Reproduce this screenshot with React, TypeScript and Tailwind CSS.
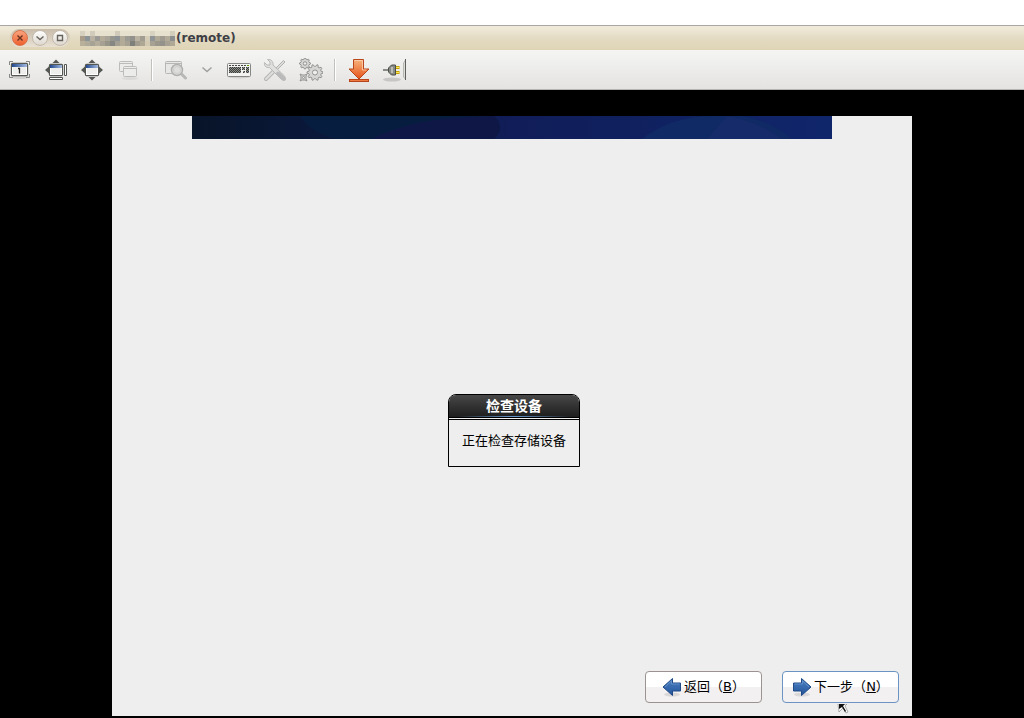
import type { ReactNode } from "react";

const mosaicRows: string[][] = [
  ["#d6d0be", "#e6e0cf", "#d0cbbb", "#e6e0cf", "#e6e0cf", "#e6e0cf", "#e6e0cf", "#cfcab9", "#e6e0cf", "#e6e0cf", "#e6e0cf", "#e6e0cf", "#e6e0cf", "#e6e0cf", "#d8d2c0", "#e6e0cf", "#e6e0cf", "#e6e0cf", "#d3cdbc"],
  ["#a99c88", "#8b9496", "#b9b2a2", "#9b9a95", "#b5ab99", "#a9a498", "#96968f", "#8d9394", "#b3ab9a", "#9b9b94", "#93918b", "#bbb3a1", "#a19d92", "#d6cdb8", "#8f9496", "#b0a997", "#9f9b90", "#b3ab99", "#8b8f90"],
  ["#b9b09c", "#b0aa9b", "#a6a295", "#b5ad9b", "#a7a193", "#979488", "#868783", "#a39f92", "#b3ab98", "#a7a193", "#7f7f7b", "#a39d8f", "#aea794", "#d3cab3", "#a7a193", "#9b978b", "#94928a", "#a7a193", "#b0a896"],
];

function Mosaic() {
  return (
    <svg className="h-[15px] w-[95px]" viewBox="0 0 95 15" shapeRendering="crispEdges" aria-hidden="true">
      {mosaicRows.map((row, y) =>
        row.map((fill, x) => <rect key={`${x}-${y}`} x={x * 5} y={y * 5} width="5" height="5" fill={fill} />),
      )}
    </svg>
  );
}

function WindowButton({ label, close, children }: { label: string; close?: boolean; children: ReactNode }) {
  return (
    <button
      type="button"
      aria-label={label}
      className={
        close
          ? "flex size-4 items-center justify-center rounded-full border border-[#d9734c] bg-linear-to-b from-[#f9a27c] to-[#ee5f2c]"
          : "flex size-4 items-center justify-center rounded-full border border-[#c3baac] bg-linear-to-b from-white to-[#dcd6cd]"
      }
    >
      <svg className="size-3 shrink-0" viewBox="0 0 12 12" fill="none" stroke={close ? "#69331f" : "#66625c"} strokeWidth="1.4">
        {children}
      </svg>
    </button>
  );
}

function Tool({ label, disabled, children }: { label: string; disabled?: boolean; children: ReactNode }) {
  return (
    <button type="button" aria-label={label} disabled={disabled} className="size-6 shrink-0">
      <svg className="size-6" viewBox="0 0 24 24" fill="none">
        {children}
      </svg>
    </button>
  );
}

function Separator() {
  return <div className="h-[22px] w-0.5 shrink-0 border-r border-l border-r-white border-l-[#c2c1be]" />;
}

function MiniScreen({ x, y, w, h }: { x: number; y: number; w: number; h: number }) {
  return (
    <>
      <rect x={x + 0.5} y={y + 0.5} width={w - 1} height={h - 1} rx="1" fill="#eeeeec" stroke="#555753" strokeWidth="1.3" />
      <rect x={x + 1.5} y={y + 1.5} width={w - 3} height={h - 3} stroke="#fff" />
      <rect x={x + 1} y={y + 1} width={w - 2} height="3" fill="url(#screenTitle)" />
    </>
  );
}

function Gear({ cx, cy, r, teeth }: { cx: number; cy: number; r: number; teeth: number }) {
  const points = Array.from({ length: teeth * 4 }, (_, i) => {
    const a = ((i - 0.5) / (teeth * 4)) * Math.PI * 2;
    const d = i % 4 < 2 ? r : r * 0.76;
    return `${cx + Math.cos(a) * d},${cy + Math.sin(a) * d}`;
  }).join(" ");
  return (
    <>
      <polygon points={points} fill="#d6d6d4" stroke="#92928f" />
      <circle cx={cx} cy={cy} r={r * 0.32} fill="#eeeeec" stroke="#92928f" />
    </>
  );
}

function Arrow({ flip }: { flip?: boolean }) {
  return (
    <svg className="size-5 shrink-0" viewBox="0 0 20 20" aria-hidden="true">
      <ellipse cx="10" cy="17.5" rx="8" ry="2" fill="#000" opacity="0.1" />
      <g transform={flip ? "translate(20 0) scale(-1 1)" : undefined}>
        <path d="M1 10 10.5 1.500V6H18.500V14H10.500V18.500Z" fill="url(#arrowFill)" stroke="#204a87" strokeLinejoin="round" />
        <path d="M3 10 9.500 3.800V7H17.500" fill="none" stroke="#6b98d0" strokeWidth="0.800" />
      </g>
    </svg>
  );
}

export default function App() {
  return (
    <div className="flex min-h-screen flex-col bg-black font-['DejaVu_Sans','Noto_Sans_CJK_SC',sans-serif] text-black">
      <svg className="absolute size-0" aria-hidden="true">
        <defs>
          <linearGradient id="screenTitle">
            <stop offset="0" stopColor="#23498f" />
            <stop offset="1" stopColor="#a3bbe0" />
          </linearGradient>
          <linearGradient id="arrowFill" x2="0" y2="1">
            <stop offset="0" stopColor="#4a80c2" />
            <stop offset="1" stopColor="#24549a" />
          </linearGradient>
          <linearGradient id="downFill" x2="0" y2="1">
            <stop offset="0" stopColor="#f8b27c" />
            <stop offset="1" stopColor="#e5531a" />
          </linearGradient>
          <pattern id="keys" width="2" height="2" patternUnits="userSpaceOnUse">
            <rect width="2" height="2" fill="#8d8f8b" />
            <rect width="1" height="1" fill="#3a3c39" />
            <rect x="1" y="1" width="1" height="1" fill="#3a3c39" />
          </pattern>
        </defs>
      </svg>

      <div className="h-[25px] bg-white" />
      <header className="flex h-[25px] items-center border-t border-[#aaa6a3] bg-linear-to-b from-[#efe9d9] from-10% via-[#e3dbc3] via-50% to-[#dfd4b5] px-2.5">
        <div className="flex h-[18px] items-center gap-1 rounded-full bg-linear-to-b from-[#c8bbaa] to-[#e9e2d4] px-0.5">
          <WindowButton label="Close" close>
            <path d="m3.5 3.5 5 5m0-5-5 5" />
          </WindowButton>
          <WindowButton label="Minimize">
            <path d="m2.5 4.500 3.500 3 3.500-3" />
          </WindowButton>
          <WindowButton label="Maximize">
            <path d="M3.500 3.500h5v5h-5z" />
          </WindowButton>
        </div>
        <h1 className="ml-2.5 flex items-center gap-px text-[12px] leading-5 font-bold text-[#3f3f46]">
          <Mosaic />
          (remote)
        </h1>
      </header>

      <nav aria-label="Remote view" className="flex h-10 items-center border-b border-[#b5b4b2] bg-linear-to-b from-[#f5f5f4] to-[#e4e3e1] px-2">
        <div className="flex items-center gap-3">
          <Tool label="Original size">
            <ellipse cx="12" cy="19" rx="9" ry="2" fill="#000" opacity="0.1" />
            <path d="M1.500 7V3.500H5M18 3.500h3.500V7M1.500 16v3.500H5M18 19.500h3.500V16" stroke="#858783" />
            <MiniScreen x={3} y={5} w={17} h={13} />
            <path d="M10 10.500h1.500v5" stroke="#222" strokeWidth="1.300" />
          </Tool>
          <Tool label="Fit window to remote">
            <path d="M8.500 5h7L12 1.500zM5 8.500v7L1 12z" fill="#555753" />
            <MiniScreen x={5} y={6} w={14} h={12} />
            <path d="M20.500 6.500h2v11h-2zM5.500 19.500h13v2h-13z" fill="#fff" stroke="#555753" />
          </Tool>
          <Tool label="Scale">
            <path d="M8.500 5h7L12 1.500zM5 8.500v7L1 12zM8.500 19h7L12 22.500zM19 8.500v7L23 12z" fill="#555753" />
            <MiniScreen x={5} y={6} w={14} h={12} />
          </Tool>
          <Tool label="Switch page" disabled>
            <ellipse cx="14" cy="20.500" rx="8" ry="1.500" fill="#000" opacity="0.06" />
            <g fill="#ececeb" stroke="#bcbcba">
              <rect x="3.500" y="3.500" width="13" height="10" rx="1" />
              <path d="M4 5.500h12" />
              <rect x="7.500" y="8.500" width="13" height="10" rx="1" />
              <path d="M8 10.500h12" />
            </g>
          </Tool>
        </div>
        <div className="px-[11px]">
          <Separator />
        </div>
        <div className="flex items-center gap-3">
          <Tool label="Quality" disabled>
            <g stroke="#b7b7b5">
              <rect x="1.500" y="3.500" width="16" height="12" rx="1" fill="#e7e7e5" />
              <path d="M2 5.500h15" />
              <path d="m17.500 16 4 4" strokeWidth="3" strokeLinecap="round" />
              <circle cx="13" cy="12" r="5.500" fill="#dededd" stroke="#b0b0ae" strokeWidth="1.500" />
              <circle cx="13" cy="12" r="3.500" stroke="#cdcdcb" />
            </g>
          </Tool>
          <button type="button" aria-label="Quality options" disabled className="w-[15px]">
            <svg className="h-6 w-[15px]" viewBox="0 0 15 24" fill="none" stroke="#a0a09e" strokeWidth="1.500">
              <path d="m2.500 9.500 4.500 4 4.500-4" />
            </svg>
          </button>
          <Tool label="Keyboard">
            <ellipse cx="12" cy="19" rx="11" ry="1.500" fill="#000" opacity="0.1" />
            <rect x="0.500" y="5.500" width="23" height="13" rx="1" fill="#f3f3f2" stroke="#858783" />
            <path d="M2 7.500h18" stroke="#444643" strokeDasharray="2 1" />
            <path d="M20 7.500h2" stroke="#4e9a06" />
            <path d="M2 9h12v6H2zM15 9h3v3h-3zM16 13h2v2h-2zM19 9h3v6h-3z" fill="url(#keys)" />
          </Tool>
          <Tool label="Send keys" disabled>
            <path d="m3 21 9-9" stroke="#b5b5b3" strokeWidth="4" strokeLinecap="round" />
            <path d="m3 21 9-9" stroke="#dededc" strokeWidth="2" strokeLinecap="round" />
            <path d="M10 13 20.500 2.500l1.500 1.500L12 14" fill="#ddd" stroke="#b0b0ae" />
            <path d="M4.500 1.500 7 4v3H4L1.500 4.500C1 8 3 10 6.500 9.500L18 21c2 2 5 0 3.500-3L10 7C10.500 3.500 8 1 4.500 1.500Z" fill="#dfdfdd" stroke="#b8b8b6" />
            <path d="m15 15.500 6 5.500" stroke="#bababa" strokeWidth="4" strokeLinecap="round" />
          </Tool>
          <Tool label="Preferences" disabled>
            <Gear cx={6} cy={5.5} r={5.5} teeth={8} />
            <path d="M1 16l2 1h3l2-1-1 2v3l1 2-2-1H3l-2 1 1-2v-3z" fill="#d6d6d4" stroke="#92928f" />
            <circle cx="4.500" cy="19.500" r="1" fill="#eee" stroke="#92928f" />
            <Gear cx={16} cy={14.5} r={8} teeth={10} />
          </Tool>
        </div>
        <div className="px-[11px]">
          <Separator />
        </div>
        <div className="flex items-center gap-3">
          <Tool label="Minimize window">
            <path d="M6.500 1.500h10v9.500h5.500L12 21 2 11h4.500Z" fill="url(#downFill)" stroke="#b9461a" />
            <path d="M7.500 2.500h8v9.500h4" stroke="#fbd2b3" strokeWidth="0.800" />
            <rect x="2.500" y="21.500" width="19" height="2" fill="#ee7a42" stroke="#b9461a" />
          </Tool>
          <Tool label="Disconnect">
            <ellipse cx="9" cy="21.500" rx="9" ry="2" fill="#000" opacity="0.14" />
            <path d="M0 12h6" stroke="#8a8c88" strokeWidth="2" />
            <path d="M12 9.500h4.500M12 14.500h4.500" stroke="#c4a000" strokeWidth="3" />
            <path d="M12 9.500h4M12 14.500h4" stroke="#fce94f" />
            <path d="M5.500 10 8.500 7h4v10h-4L5.500 14Z" fill="#888a85" stroke="#4b4d49" />
            <path d="M8 9h2v6H8z" fill="#babdb6" />
            <path d="M22.500 2v19l-2-2V5Z" fill="#deded9" stroke="#a2a39f" strokeWidth="0.700" />
            <path d="M22.500 1v21" stroke="#5f605d" />
          </Tool>
        </div>
      </nav>

      <main className="mx-auto mt-[26px] mb-0.5 flex w-full max-w-[800px] grow flex-col bg-[#eee]">
        <div className="mx-20 h-[23px] overflow-hidden bg-linear-to-r from-[#081428] via-[#101d58] via-50% to-[#10266b]">
          <svg className="h-full w-full" viewBox="0 0 640 23" preserveAspectRatio="none" aria-hidden="true">
            <path d="M108 0C115 12 130 20 145 23H302Q314 12 302 0Z" fill="#071d40" />
            <path d="M180 23Q225 0 302 0q12 11 0 23Z" fill="#111747" opacity="0.800" />
            <path d="M450 23Q480 0 520 0h30q30 5 50 23Z" fill="#102a65" />
            <path d="M515 23 535 0q30 5 55 23Z" fill="#162b69" />
          </svg>
        </div>

        <div className="flex grow items-center justify-center pl-1">
          <section role="dialog" aria-labelledby="dialog-title" className="mt-[50px] w-[132px] overflow-hidden rounded-t-lg border border-black">
            <h2
              id="dialog-title"
              className="flex h-[23px] flex-col items-center justify-end border-b border-black bg-linear-to-b from-[#484848] to-[#1e1e1e] text-[14px] leading-[19px] font-bold text-white"
            >
              检查设备
              <span className="h-px w-28 bg-linear-to-r from-transparent via-[#6699cf] to-transparent" />
            </h2>
            <div className="mt-px border-t border-black pt-2.5 pb-3.5 text-center text-[13px] leading-[22px]">正在检查存储设备</div>
          </section>
        </div>

        <footer className="flex justify-end gap-5 px-[13px] pb-[13px] text-[13px]">
          <button
            type="button"
            className="flex h-8 w-[117px] items-center justify-center rounded border border-[#9d9292] bg-linear-to-b from-white from-50% to-[#f3f0f2] to-50% whitespace-nowrap"
          >
            <Arrow />
            <span className="pl-0.5">
              返回（<u>B</u>）
            </span>
          </button>
          <button
            type="button"
            className="relative flex h-8 w-[117px] items-center justify-center rounded border border-[#6b93c3] bg-linear-to-b from-white from-50% to-[#f3f0f2] to-50% whitespace-nowrap"
          >
            <Arrow flip />
            <span className="pl-0.5">
              下一步（<u>N</u>）
            </span>
            <svg className="absolute top-8 left-[54px] h-2.5 w-3" viewBox="0 0 12 10" aria-hidden="true">
              <path d="M1 0h9L8 2l3 6-2 1-3-5-4 4Z" fill="#fff" stroke="#777" strokeWidth="0.600" />
              <path d="M2 0h6L6 2l3 5-1 1-3-5-3 2Z" fill="#111" />
            </svg>
          </button>
        </footer>
      </main>
    </div>
  );
}
